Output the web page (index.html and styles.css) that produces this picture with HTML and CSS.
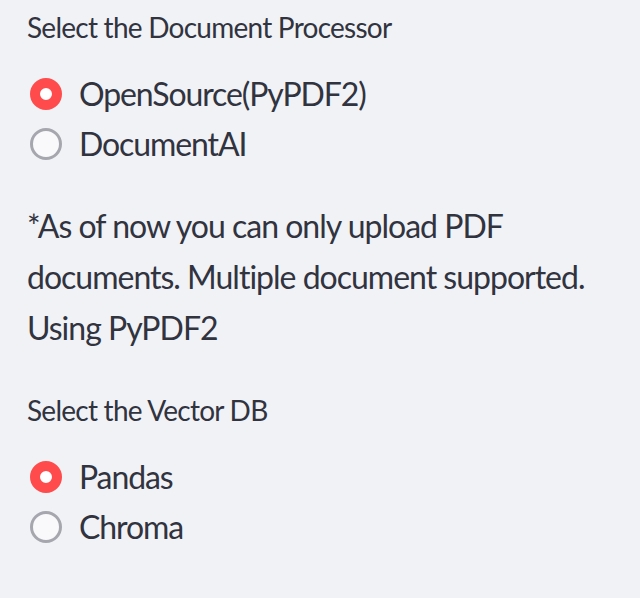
FILE: index.html
```html
<!DOCTYPE html>
<html>
<head>
<meta charset="utf-8">
<link rel="stylesheet" href="styles.css">
</head>
<body>
<div class="sidebar">
  <div class="label first">Select the Document Processor</div>
  <div class="radio-group">
    <div class="option"><span class="radio checked"></span><span class="opt-text">OpenSource(PyPDF2)</span></div>
    <div class="option"><span class="radio"></span><span class="opt-text">DocumentAI</span></div>
  </div>
  <p class="note">*As of now you can only upload PDF documents. Multiple document supported. Using PyPDF2</p>
  <div class="label">Select the Vector DB</div>
  <div class="radio-group">
    <div class="option"><span class="radio checked"></span><span class="opt-text">Pandas</span></div>
    <div class="option"><span class="radio"></span><span class="opt-text">Chroma</span></div>
  </div>
  <div class="label next">Chunk size</div>
</div>
</body>
</html>
```
FILE: styles.css
```css
html, body {
  margin: 0;
  padding: 0;
  background: #f0f2f6;
  overflow: hidden;
}
.sidebar {
  padding: 0 27px;
  color: #31333f;
  font-family: Lato, "Noto Sans", sans-serif;
  width: 586px;
}
.label {
  font-size: 28px;
  letter-spacing: -0.75px;
  line-height: 46px;
  height: 46px;
  margin-top: 34px;
  white-space: nowrap;
}
.label.first {
  margin-top: 4px;
}
.label.next {
  margin-top: 34px;
}
.radio-group {
  margin-top: 19px;
  display: flex;
  flex-direction: column;
}
.option {
  height: 50px;
  display: flex;
  align-items: center;
}
.radio {
  box-sizing: border-box;
  width: 32px;
  height: 32px;
  border-radius: 50%;
  margin-left: 3px;
  margin-right: 17px;
  border: 3px solid #a6a7ae;
  background: #f9f9fb;
  flex: none;
}
.radio.checked {
  border: 10px solid #ff4b4b;
  background: #ffffff;
}
.opt-text {
  font-size: 32px;
  letter-spacing: -1.1px;
  line-height: 50px;
}
.note {
  margin: 31px 0 0 0;
  font-size: 32px;
  letter-spacing: -1px;
  line-height: 51px;
}
```
